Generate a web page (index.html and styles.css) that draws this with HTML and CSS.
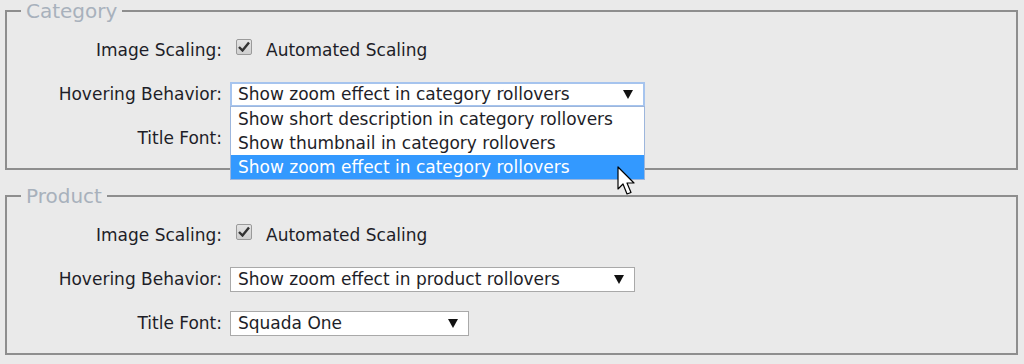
FILE: index.html
```html
<!DOCTYPE html>
<html lang="en">
<head>
  <meta charset="UTF-8" />
  <title>Display Settings</title>
  <link rel="stylesheet" href="styles.css">
</head>
<body>
  <fieldset class="group">
    <legend>Category</legend>
    <div class="row">
      <label>Image Scaling:</label>
      <div class="field">
        <span class="check"><svg width="12" height="11" viewBox="0 0 12 11"><path d="M1 6 L4.5 9.5 L11 1.5" fill="none" stroke="#333" stroke-width="2.4"/></svg></span>
        <span class="check-label">Automated Scaling</span>
      </div>
    </div>
    <div class="row">
      <label>Hovering Behavior:</label>
      <div class="field">
        <div class="select focused wide">
          <span>Show zoom effect in category rollovers</span>
          <svg class="arrow" width="10" height="9" viewBox="0 0 10 9"><path d="M0 0 H10 L5 9 Z" fill="#111"/></svg>
        </div>
        <ul class="dropdown">
          <li>Show short description in category rollovers</li>
          <li>Show thumbnail in category rollovers</li>
          <li class="active">Show zoom effect in category rollovers</li>
        </ul>
        <svg class="cursor" width="20" height="31" viewBox="0 0 20 31"><path d="M1 1 L1 23 L6 18 L10 28 L14 26.5 L10 17 L17 17 Z" fill="#fff" stroke="#000" stroke-width="1.2" stroke-linejoin="round"/></svg>
      </div>
    </div>
    <div class="row">
      <label>Title Font:</label>
      <div class="field"></div>
    </div>
  </fieldset>

  <fieldset class="group">
    <legend>Product</legend>
    <div class="row">
      <label>Image Scaling:</label>
      <div class="field">
        <span class="check"><svg width="12" height="11" viewBox="0 0 12 11"><path d="M1 6 L4.5 9.5 L11 1.5" fill="none" stroke="#333" stroke-width="2.4"/></svg></span>
        <span class="check-label">Automated Scaling</span>
      </div>
    </div>
    <div class="row">
      <label>Hovering Behavior:</label>
      <div class="field">
        <div class="select medium">
          <span>Show zoom effect in product rollovers</span>
          <svg class="arrow" width="10" height="9" viewBox="0 0 10 9"><path d="M0 0 H10 L5 9 Z" fill="#111"/></svg>
        </div>
      </div>
    </div>
    <div class="row">
      <label>Title Font:</label>
      <div class="field">
        <div class="select narrow">
          <span>Squada One</span>
          <svg class="arrow" width="10" height="9" viewBox="0 0 10 9"><path d="M0 0 H10 L5 9 Z" fill="#111"/></svg>
        </div>
      </div>
    </div>
  </fieldset>
</body>
</html>
```

FILE: styles.css
```css
* { box-sizing: border-box; }
body {
  margin: 0; padding: 0 6px 0 5px;
  background: #eaeaea;
  font-family: 'DejaVu Sans', Verdana, sans-serif;
  font-size: 17px; color: #1e1e28;
}
.group {
  margin: 0 0 15px 0;
  padding: 6px 0 8px 0;
  border: 2px solid #8e8e8e;
  min-width: 0;
}
.group legend {
  margin-left: 14px; padding: 0 5px;
  font-size: 20px; color: #a8b1bc;
  line-height: 22px;
}
.row {
  display: flex; align-items: center;
  height: 44px;
}
.row label {
  width: 215px; text-align: right;
  flex: none;
}
.field {
  position: relative;
  margin-left: 8px;
  display: flex; align-items: center;
  flex: 1; height: 100%;
}
.check {
  width: 16px; height: 16px;
  margin: -7px 0 0 6px;
  border: 1px solid #9a9a9a; border-radius: 2px;
  background: linear-gradient(#e4e4e4, #cfcfcf);
  display: flex; align-items: center; justify-content: center;
}
.check-label { margin-left: 14px; }
.select {
  height: 25px; background: #fff;
  border: 1px solid #a9a9a9;
  display: flex; align-items: center; justify-content: space-between;
  padding: 0 10px 0 7px;
}
.select.focused { border: 2px solid #a6c4ee; padding-left: 6px; }
.wide { width: 415px; }
.medium { width: 405px; }
.narrow { width: 239px; }
.dropdown {
  position: absolute; left: 0; top: 34px;
  width: 415px; margin: 0; padding: 0;
  list-style: none; background: #fff;
  border: 1px solid #9db6dc; z-index: 3;
}
.dropdown li {
  height: 24px; line-height: 24px;
  padding-left: 7px;
}
.dropdown li.active { background: #3399ff; color: #fff; }
.cursor {
  position: absolute; left: 387px; top: 94px; z-index: 4;
}
```
